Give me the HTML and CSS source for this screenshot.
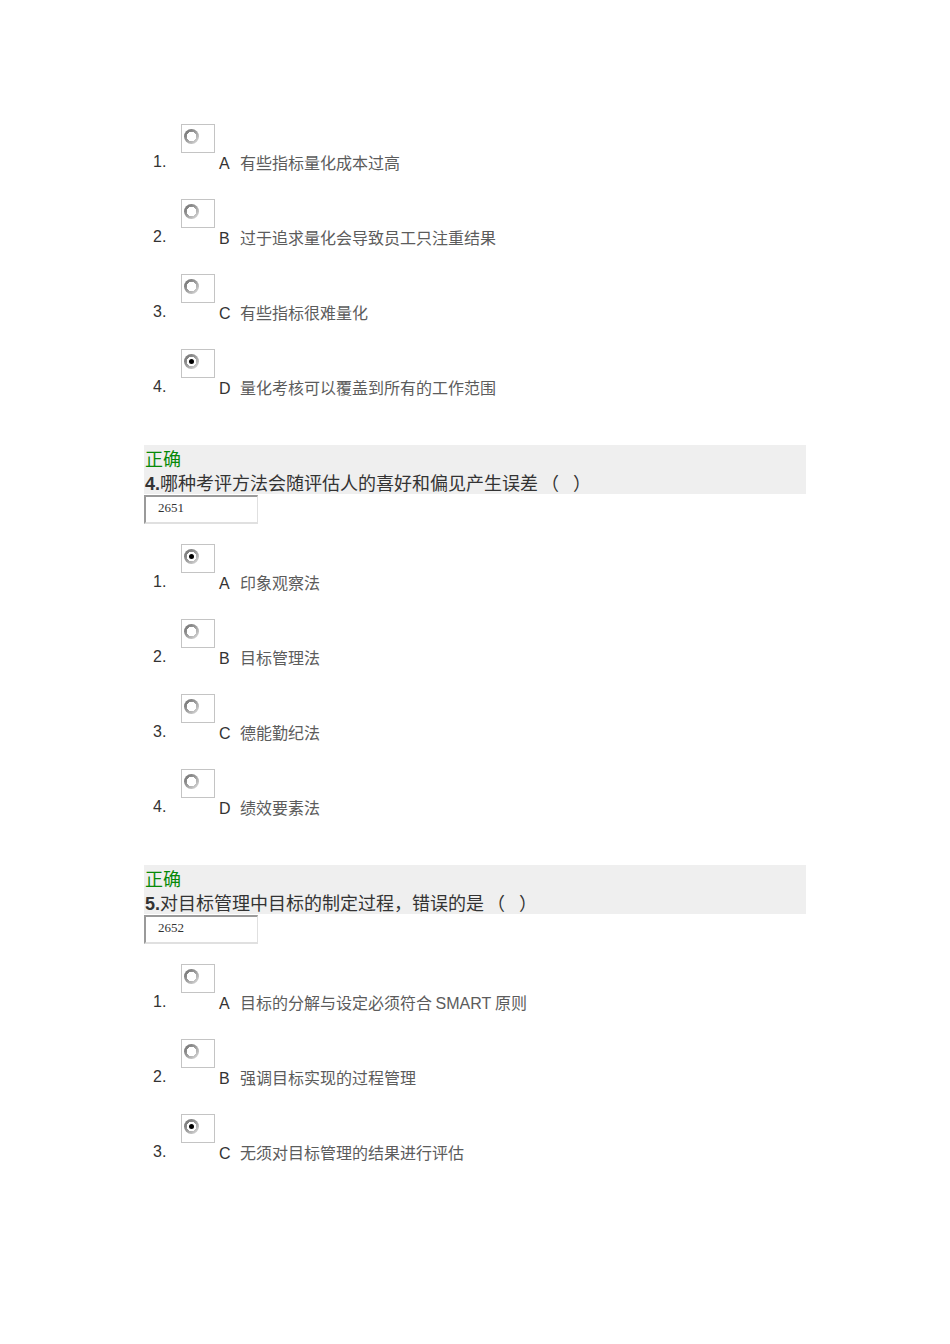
FILE: index.html
```html
<!DOCTYPE html>
<html lang="zh-CN">
<head>
<meta charset="utf-8">
<title>考试</title>
<link rel="stylesheet" href="styles.css">
</head>
<body>
<div class="page">

  <div class="options first">
    <div class="opt"><span class="num">1.</span><span class="box"><span class="radio"></span></span><span class="txt"><span class="ltr">A</span><span class="cn">有些指标量化成本过高</span></span></div>
    <div class="opt"><span class="num">2.</span><span class="box"><span class="radio"></span></span><span class="txt"><span class="ltr">B</span><span class="cn">过于追求量化会导致员工只注重结果</span></span></div>
    <div class="opt"><span class="num">3.</span><span class="box"><span class="radio"></span></span><span class="txt"><span class="ltr">C</span><span class="cn">有些指标很难量化</span></span></div>
    <div class="opt"><span class="num">4.</span><span class="box"><span class="radio checked"></span></span><span class="txt"><span class="ltr">D</span><span class="cn">量化考核可以覆盖到所有的工作范围</span></span></div>
  </div>

  <div class="qhead">
    <div class="status">正确</div>
    <div class="qtitle"><b>4.</b>哪种考评方法会随评估人的喜好和偏见产生误差<span class="pl">（</span> <span class="pr">）</span></div>
  </div>
  <div class="qid">2651</div>
  <div class="options">
    <div class="opt"><span class="num">1.</span><span class="box"><span class="radio checked"></span></span><span class="txt"><span class="ltr">A</span><span class="cn">印象观察法</span></span></div>
    <div class="opt"><span class="num">2.</span><span class="box"><span class="radio"></span></span><span class="txt"><span class="ltr">B</span><span class="cn">目标管理法</span></span></div>
    <div class="opt"><span class="num">3.</span><span class="box"><span class="radio"></span></span><span class="txt"><span class="ltr">C</span><span class="cn">德能勤纪法</span></span></div>
    <div class="opt"><span class="num">4.</span><span class="box"><span class="radio"></span></span><span class="txt"><span class="ltr">D</span><span class="cn">绩效要素法</span></span></div>
  </div>

  <div class="qhead">
    <div class="status">正确</div>
    <div class="qtitle"><b>5.</b>对目标管理中目标的制定过程，错误的是<span class="pl">（</span> <span class="pr">）</span></div>
  </div>
  <div class="qid">2652</div>
  <div class="options">
    <div class="opt"><span class="num">1.</span><span class="box"><span class="radio"></span></span><span class="txt"><span class="ltr">A</span><span class="cn">目标的分解与设定必须符合 <span class="lat">SMART</span> 原则</span></span></div>
    <div class="opt"><span class="num">2.</span><span class="box"><span class="radio"></span></span><span class="txt"><span class="ltr">B</span><span class="cn">强调目标实现的过程管理</span></span></div>
    <div class="opt"><span class="num">3.</span><span class="box"><span class="radio checked"></span></span><span class="txt"><span class="ltr">C</span><span class="cn">无须对目标管理的结果进行评估</span></span></div>
  </div>

</div>
</body>
</html>
```

FILE: styles.css
```css
html, body {
  margin: 0;
  padding: 0;
  background: #ffffff;
}

.page {
  width: 662px;
  padding: 84px 0 0 144px;
  font-family: "Liberation Sans", Arial, "Noto Sans CJK SC", sans-serif;
  color: #333333;
}

.options {
  display: flex;
  flex-direction: column;
}

.options.first {
  margin-top: 20px;
}

.opt {
  display: flex;
  align-items: flex-end;
  height: 66px;
  margin-bottom: 9px;
  font-size: 16px;
  line-height: 16px;
  box-sizing: border-box;
  padding-top: 20px;
}

.num {
  width: 28px;
  padding-left: 9px;
  height: 16px;
  line-height: 16px;
  flex: none;
}

.box {
  flex: none;
  width: 34px;
  height: 29px;
  box-sizing: border-box;
  border: 1px solid #c4c4c4;
  margin-bottom: 17px;
  position: relative;
}

.radio {
  position: absolute;
  left: 2px;
  top: 4px;
  width: 15px;
  height: 15px;
  box-sizing: border-box;
  border-radius: 50%;
  background:
    radial-gradient(circle at 50% 50%, #ffffff 0, #ffffff 4.6px, transparent 4.8px),
    linear-gradient(135deg, #6a6a6a 0%, #999999 45%, #e4e4e4 100%);
}

.radio.checked::after {
  content: "";
  position: absolute;
  left: 5px;
  top: 5px;
  width: 5px;
  height: 5px;
  border-radius: 50%;
  background: #000000;
}

.txt {
  margin-left: 4px;
  height: 16px;
  line-height: 16px;
  white-space: nowrap;
  display: flex;
  align-items: baseline;
}

.ltr {
  display: inline-block;
  width: 21px;
  color: #333333;
}

.cn {
  font-family: "Noto Sans CJK SC", "Liberation Sans", sans-serif;
  font-size: 16px;
  line-height: 16px;
  color: #5c5c5c;
}

.cn .lat {
  font-family: "Liberation Sans", Arial, sans-serif;
  font-size: 16px;
}

.qhead {
  margin-top: 41px;
  background: #efefef;
  height: 49px;
  box-sizing: border-box;
  padding-top: 2px;
  font-family: "Noto Sans CJK SC", "Liberation Sans", sans-serif;
  font-size: 18px;
  line-height: 23.5px;
}

.status {
  color: #078a07;
  padding-left: 1px;
}

.qtitle {
  color: #333333;
  padding-left: 1px;
  white-space: pre;
}

.qtitle b {
  font-family: "Liberation Sans", Arial, sans-serif;
  font-weight: bold;
}

.pl {
  display: inline-block;
  padding-left: 3px;
}

.pr {
  display: inline-block;
  padding-left: 10px;
}

.qid {
  margin-top: 1px;
  width: 114px;
  height: 29px;
  box-sizing: border-box;
  border-style: solid;
  border-width: 2px 1px 2px 2px;
  border-color: #9a9a9a #e0e0e0 #e0e0e0 #9a9a9a;
  padding: 3px 0 0 12px;
  font-family: "Liberation Serif", "Times New Roman", serif;
  font-size: 13px;
  line-height: 16px;
  color: #333333;
}
```
